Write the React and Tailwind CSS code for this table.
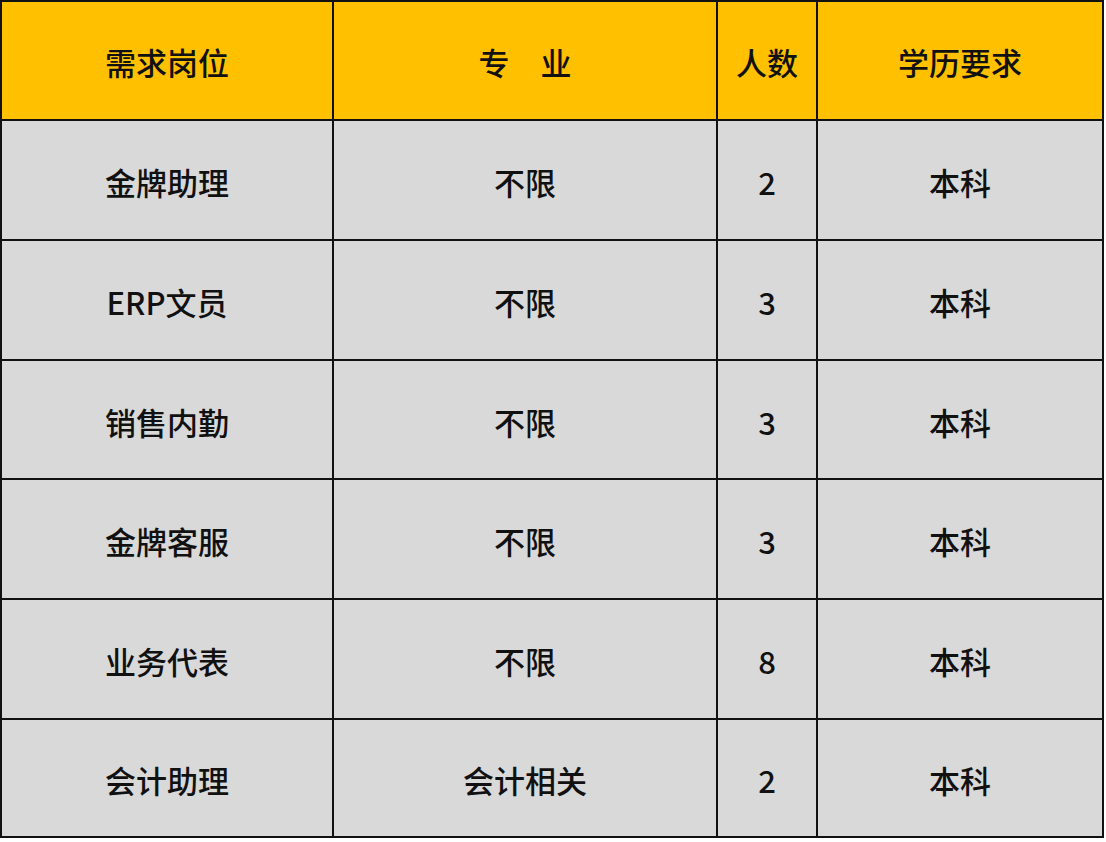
export default function App() {
  const header = ["需求岗位", "专\u3000业", "人数", "学历要求"];
  const rows = [
    ["金牌助理", "不限", "2", "本科"],
    ["ERP文员", "不限", "3", "本科"],
    ["销售内勤", "不限", "3", "本科"],
    ["金牌客服", "不限", "3", "本科"],
    ["业务代表", "不限", "8", "本科"],
    ["会计助理", "会计相关", "2", "本科"],
  ];
  const font = { fontFamily: '"Noto Sans CJK SC", "Noto Sans", sans-serif' };
  return (
    <div className="w-[1106px] h-[842px] bg-white" style={font}>
      <div className="w-[1104px] grid grid-cols-[330px_382px_98px_284px] grid-rows-[117px_118px_118px_117px_118px_118px_116px] gap-[2px] p-[2px] bg-[#111111] text-[31px] font-medium text-[#111111]">
        {header.map((h, i) => (
          <div key={"h" + i} className="bg-[#ffc000] flex items-center justify-center pt-[3px]">
            {h}
          </div>
        ))}
        {rows.map((r, ri) =>
          r.map((c, ci) => (
            <div key={ri + "-" + ci} className="bg-[#d9d9d9] flex items-center justify-center pt-[5px]">
              {c}
            </div>
          ))
        )}
      </div>
    </div>
  );
}
